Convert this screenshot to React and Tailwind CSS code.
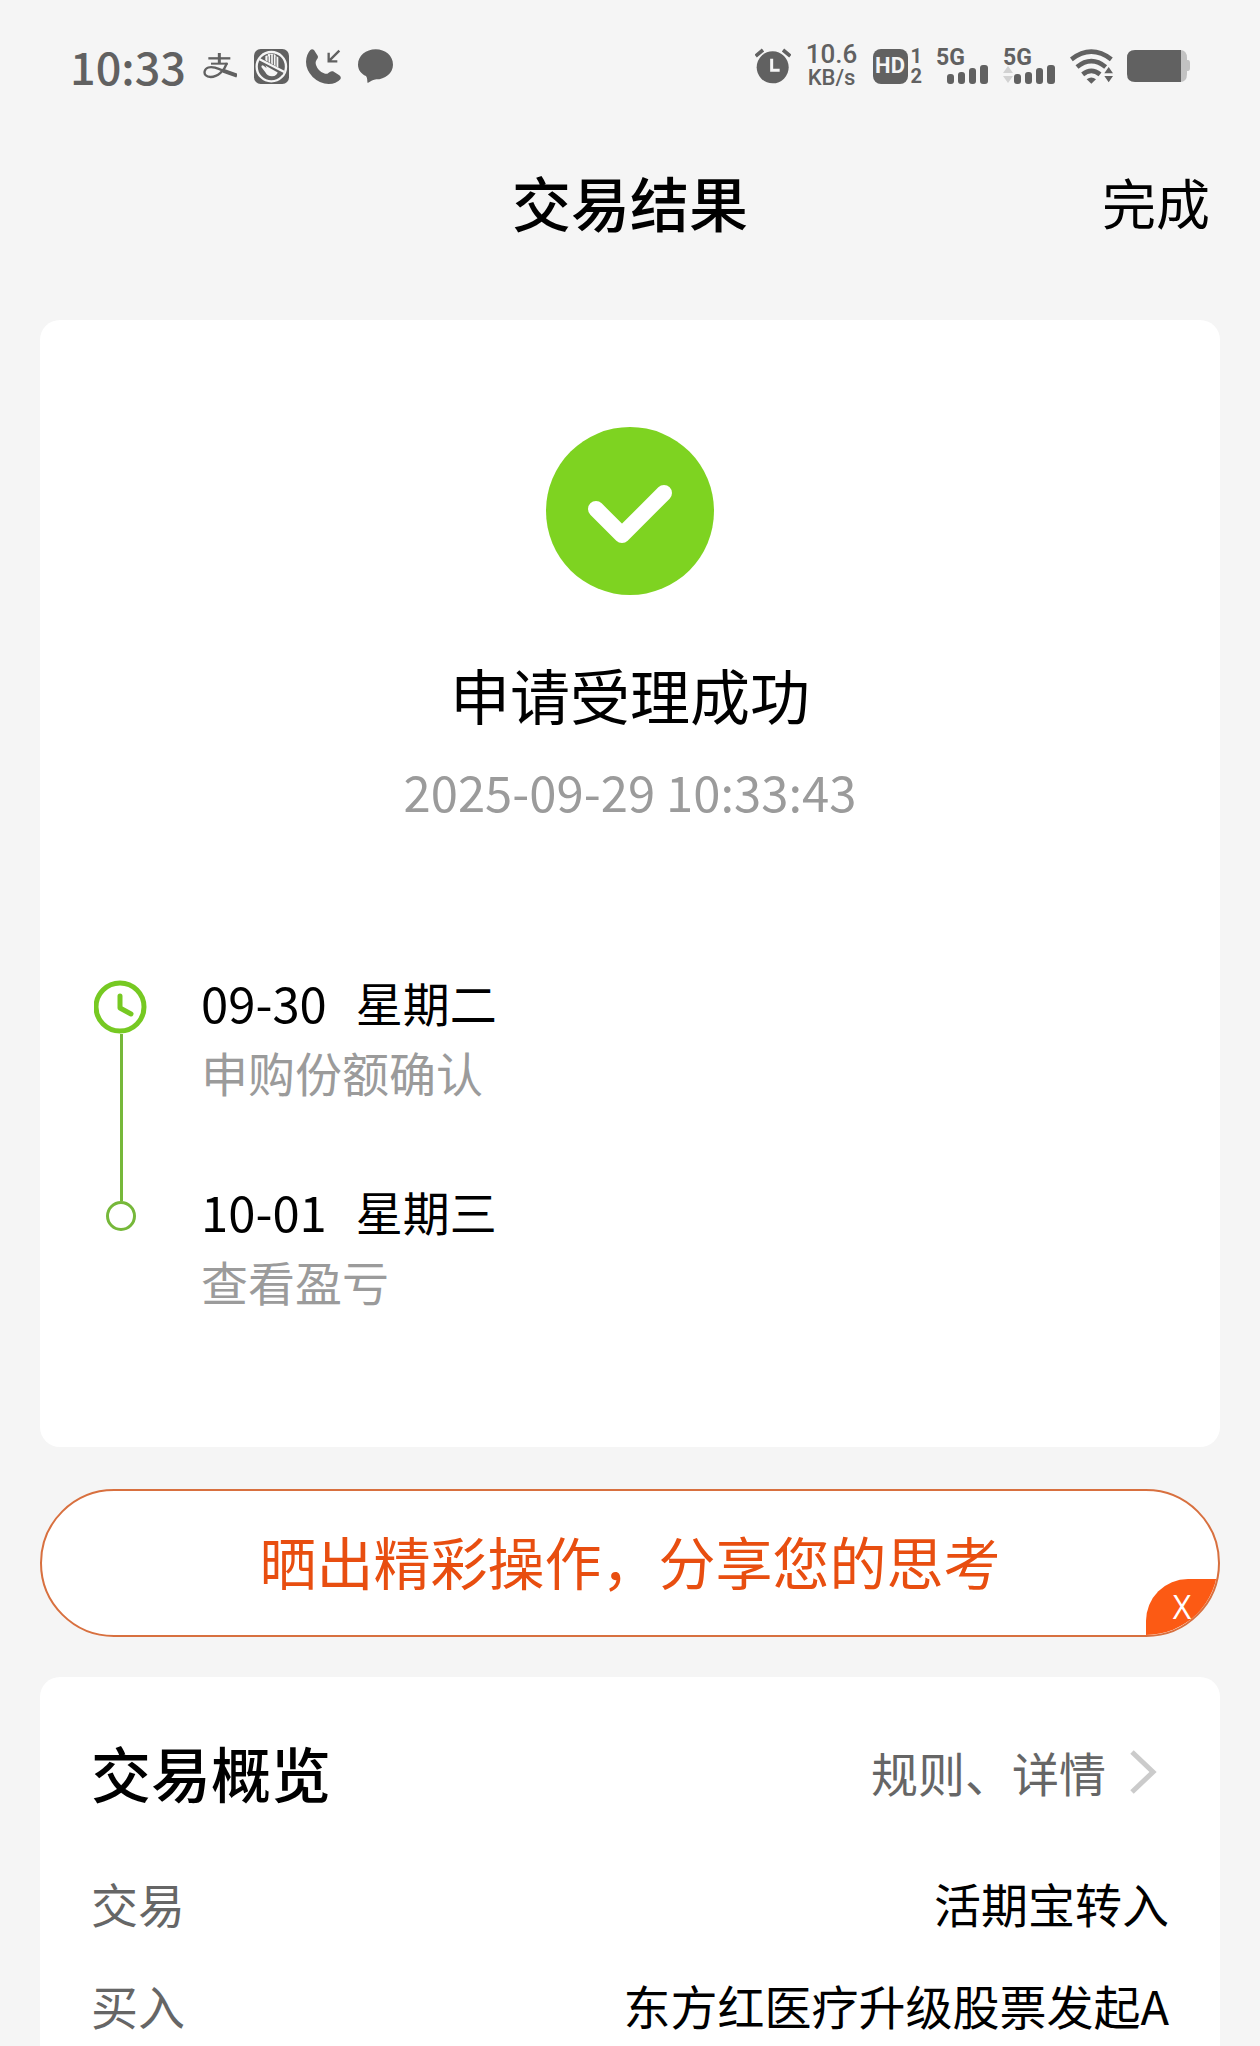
import React from 'react';

const timeline = [
  { date: '09-30', weekday: '星期二', note: '申购份额确认' },
  { date: '10-01', weekday: '星期三', note: '查看盈亏' },
];

const overview = [
  { label: '交易', value: '活期宝转入' },
  { label: '买入', value: '东方红医疗升级股票发起A' },
];

const AlipayIcon = () => (
  <svg width="34" height="28" viewBox="460 68 102 84" fill="none" stroke="#616161" aria-hidden="true">
    <path d="M476 87H542" strokeWidth="7" />
    <path d="M509 71V104" strokeWidth="9" />
    <path d="M484 103H534" strokeWidth="6" />
    <path d="M532 101C524 124 504 143 483 143C469 143 463 135 465 126C468 114 481 111 496 115C518 121 532 131 562 138" strokeWidth="7" />
    <path d="M520 124L562 139" strokeWidth="12" />
  </svg>
);

const HandIcon = () => (
  <svg width="35" height="35" viewBox="0 0 105 105" fill="none" aria-hidden="true">
    <rect width="105" height="105" rx="20" fill="#616161" />
    <circle cx="52" cy="53" r="44" stroke="#f5f5f5" strokeWidth="7" />
    <path
      d="M34 48V22Q37 17 41 22V17Q45 12 49 17V16Q53 12 57 16V18Q61 14 65 18V24Q69 20 73 25V64Q70 82 54 82Q40 82 34 70L22 54Q22 47 29 50L38 58Z"
      fill="#f5f5f5"
    />
    <path d="M42 22V46M50 18V50M58 18V52M66 24V54" stroke="#616161" strokeWidth="3" />
    <path d="M20 34L88 72" stroke="#616161" strokeWidth="14" />
    <path d="M17 31L91 69" stroke="#f5f5f5" strokeWidth="7" />
  </svg>
);

const IncomingCallIcon = () => (
  <svg width="35" height="35" viewBox="0 0 105 105" fill="none" aria-hidden="true">
    <path
      d="M13 3Q18 -2 24 3L35 20Q38 26 32 32Q27 38 30 48Q36 66 54 73Q62 77 68 71Q74 65 81 67L100 79Q107 84 103 91Q91 105 68 105Q42 105 20 84Q0 62 0 38Q1 16 13 3Z"
      fill="#616161"
    />
    <path d="M100 5L70 35M68 11V37H94" stroke="#616161" strokeWidth="7" />
  </svg>
);

const BubbleIcon = () => (
  <svg width="35" height="35" viewBox="0 0 105 105" aria-hidden="true">
    <path d="M53 1C82 1 105 20 105 47C105 73 80 91 55 91C46 91 38 98 29 102C27 96 29 88 24 81C9 74 0 62 0 47C0 20 24 1 53 1Z" fill="#616161" />
  </svg>
);

const AlarmIcon = () => (
  <svg width="36" height="36" viewBox="0 0 108 108" fill="none" aria-hidden="true">
    <circle cx="53" cy="58" r="48" fill="#616161" />
    <path d="M2 24L24 6M84 6L106 24" stroke="#616161" strokeWidth="11" />
    <path d="M50 32V67H74" stroke="#f5f5f5" strokeWidth="9" />
  </svg>
);

const SignalIcon = ({ arrows }) => (
  <svg width="53" height="36" viewBox="0 0 53 36" fill="#616161" className="overflow-visible" role="img" aria-label="5G">
    <text x="0" y="17" className="font-[Roboto] text-[23px] font-bold">5G</text>
    {arrows && <path d="M0 25L5 18L10 25ZM0 28H10L5 35Z" fill="#d2d2d2" />}
    <rect x="11" y="26" width="7" height="10" rx="3" />
    <rect x="22" y="24" width="7" height="12" rx="3" />
    <rect x="33" y="20" width="7" height="16" rx="3" />
    <rect x="44" y="17" width="8" height="19" rx="3" />
  </svg>
);

const WifiIcon = () => (
  <svg width="43" height="36" viewBox="0 0 129 108" fill="none" aria-hidden="true">
    <g stroke="#616161" strokeWidth="14">
      <path d="M4 34Q64 -12 124 34" />
      <path d="M21 57Q64 22 107 57" />
      <path d="M38 79Q64 58 90 79" />
    </g>
    <path d="M50 94Q64 83 78 94L64 107Z" fill="#616161" />
    <path d="M98 80L116 52L134 80Z" fill="#f5f5f5" />
    <path d="M103 76L116 57L129 76ZM103 84H129L116 103Z" fill="#616161" />
  </svg>
);

const BatteryIcon = () => (
  <svg width="63" height="32" viewBox="0 0 63 32" aria-hidden="true">
    <path d="M50 0H53Q60 0 60 8V10H61Q63 10 63 13V18Q63 21 61 21H60V24Q60 32 53 32H50Z" fill="#c2c2c2" />
    <path d="M8 0H54V32H8Q0 32 0 24V8Q0 0 8 0Z" fill="#616161" />
  </svg>
);

const StatusBar = () => (
  <div className="flex h-[132px] items-center justify-between px-[70px] text-[#616161]">
    <div className="flex items-center gap-[17px]">
      <span className="text-[45px] leading-[60px] font-medium">10:33</span>
      <AlipayIcon />
      <HandIcon />
      <IncomingCallIcon />
      <BubbleIcon />
    </div>
    <div className="flex items-center gap-[14px]">
      <AlarmIcon />
      <div className="flex w-[54px] flex-col items-center font-[Roboto] font-medium">
        <span className="text-[26px] leading-[24px]">10.6</span>
        <span className="text-[22px] leading-[24px]">KB/s</span>
      </div>
      <div className="flex items-center gap-[3px]">
        <span className="flex size-[35px] items-center justify-center rounded-[8px] bg-[#616161] font-[Roboto] text-[22px] leading-none font-bold text-[#f5f5f5]">
          HD
        </span>
        <span className="flex flex-col font-[Roboto] text-[20px] leading-[20px] font-bold">
          <span>1</span>
          <span>2</span>
        </span>
      </div>
      <SignalIcon />
      <SignalIcon arrows />
      <WifiIcon />
      <BatteryIcon />
    </div>
  </div>
);

const SuccessIcon = () => (
  <svg width="168" height="168" viewBox="0 0 168 168" fill="none" className="mx-auto" aria-hidden="true">
    <circle cx="84" cy="84" r="84" fill="#7ed321" />
    <path d="M50 82L76 108L118 66" stroke="#fff" strokeWidth="16" strokeLinecap="round" strokeLinejoin="round" />
  </svg>
);

const ClockIcon = () => (
  <svg width="54" height="54" viewBox="0 0 54 54" fill="none" stroke="#76c922" className="shrink-0" aria-hidden="true">
    <circle cx="26" cy="27" r="24" strokeWidth="5" />
    <path d="M26 16V28L37 34" strokeWidth="5" strokeLinecap="round" strokeLinejoin="round" />
  </svg>
);

const TimelineItem = ({ item, isLast }) => (
  <li className={`flex gap-[50px] ${isLast ? '' : 'h-[209px]'}`}>
    <div className={`flex w-[60px] flex-col items-center ${isLast ? '' : 'pt-[8px]'}`}>
      {isLast ? (
        <>
          <div className="h-[20px] w-[3px] bg-[#76b83a]"></div>
          <div className="size-[30px] rounded-full border-[3px] border-[#76b83a]"></div>
        </>
      ) : (
        <>
          <ClockIcon />
          <div className="w-[3px] flex-1 bg-[#76b83a]"></div>
        </>
      )}
    </div>
    <div className="flex flex-col gap-[10px] text-[47px] leading-[60px]">
      <p className="flex gap-[29px] text-black">
        <span className="text-[49px]">{item.date}</span>
        <span>{item.weekday}</span>
      </p>
      <p className="text-[#9b9b9b]">{item.note}</p>
    </div>
  </li>
);

const App = () => {
  return (
    <div className="flex min-h-screen flex-col bg-[#f5f5f5] font-['Noto_Sans_CJK_SC',sans-serif] text-black">
      <StatusBar />

      {/* Page header */}
      <header className="grid h-[140px] grid-cols-[1fr_auto_1fr] items-center px-[50px]">
        <h1 className="col-start-2 text-[59px] leading-[80px] font-medium">交易结果</h1>
        <button type="button" className="justify-self-end text-[54px] leading-[80px]">完成</button>
      </header>

      <main className="mt-[48px] flex flex-1 flex-col px-[40px]">
        {/* Result and timeline */}
        <section className="rounded-[20px] bg-white px-[51px] pt-[107px] pb-[136px]">
          <SuccessIcon />
          <h2 className="mt-[59px] text-center text-[60px] leading-[80px]">申请受理成功</h2>
          <p className="mt-[27px] text-center text-[49px] leading-[60px] text-[#9b9b9b]">2025-09-29 10:33:43</p>
          <ol className="mt-[151px]">
            {timeline.map((item, index) => (
              <TimelineItem key={item.date} item={item} isLast={index === timeline.length - 1} />
            ))}
          </ol>
        </section>

        {/* Share banner */}
        <div className="relative mt-[42px] h-[148px] overflow-hidden rounded-full border-2 border-[#d8703f] bg-white">
          <button type="button" className="size-full pb-[4px] text-[57px] text-[#e84e10]">
            晒出精彩操作，分享您的思考
          </button>
          <button
            type="button"
            className="absolute right-0 bottom-0 h-[56px] w-[72px] rounded-tl-[42px] bg-[#fc5a14] font-['Open_Sans'] text-[32px] leading-[54px] text-white"
          >
            X
          </button>
        </div>

        {/* Trade overview */}
        <section className="mt-[40px] flex-1 rounded-t-[20px] bg-white px-[51px] pt-[55px] pb-[12px]">
          <div className="flex items-center justify-between">
            <h2 className="text-[60px] leading-[80px] font-medium">交易概览</h2>
            <a href="#" className="flex items-center gap-[24px] pr-[12px] text-[47px] leading-[60px] text-[#666]">
              规则、详情
              <svg width="27" height="44" viewBox="0 0 27 44" fill="none" stroke="#cbcbcb" strokeWidth="5" aria-hidden="true">
                <path d="M2 2L23 22L2 42" />
              </svg>
            </a>
          </div>
          <dl className="mt-[61px] flex flex-col gap-[42px] text-[47px] leading-[60px]">
            {overview.map((row) => (
              <div key={row.label} className="flex justify-between">
                <dt className="text-[#666]">{row.label}</dt>
                <dd>{row.value}</dd>
              </div>
            ))}
          </dl>
        </section>
      </main>
    </div>
  );
};

export default App;
